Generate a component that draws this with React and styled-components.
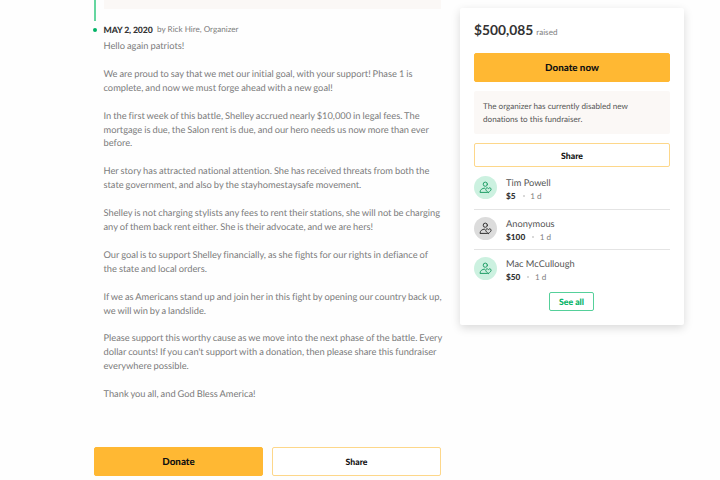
import styled, { createGlobalStyle } from "styled-components";

const colors = {
  yellow: "#ffb833",
  green: "#02b366",
  dark: "#333",
  grey: "#7c7c7c",
  beige: "#fbf8f6",
};

const GlobalStyle = createGlobalStyle`
  * {
    box-sizing: border-box;
  }
  body {
    margin: 0;
    background: #fefefe;
    font-family: Lato, "Liberation Sans", sans-serif;
    font-variant-ligatures: none;
    text-rendering: geometricPrecision;
    overflow: hidden;
  }
`;

const Page = styled.div`
  display: flex;
  align-items: flex-start;
  gap: 19px;
  width: 720px;
  height: 480px;
  padding-left: 94px;
  overflow: hidden;
`;

const Main = styled.main`
  width: 347px;
`;

const Previous = styled.div`
  display: flex;
  gap: 8px;
  height: 21px;
`;

const TimelineBar = styled.div`
  width: 2px;
  height: 21px;
  background: #65d6a0;
`;

const PreviousBox = styled.div`
  flex: 1;
  height: 9px;
  background: ${colors.beige};
`;

const UpdateHeader = styled.header`
  display: flex;
  align-items: center;
  height: 16px;
  margin-left: -1px;
  font-size: 8.12px;
  color: ${colors.grey};
`;

const Dot = styled.span`
  width: 4px;
  height: 4px;
  margin: 1px 6.5px 0 0;
  border-radius: 50%;
  background: ${colors.green};
`;

const UpdateDate = styled.strong`
  margin-right: 4.5px;
  font-size: 8.7px;
  font-weight: 900;
  letter-spacing: -0.12px;
  color: ${colors.dark};
`;

const Story = styled.div`
  height: 410px;
  padding: 2px 0 0 9.5px;
  font-size: 9.3px;
  line-height: 13.92px;
  word-spacing: -0.4px;
  color: ${colors.grey};
  white-space: pre;
`;

const Actions = styled.div`
  display: flex;
  gap: 9px;
`;

const Button = styled.button`
  flex: 1;
  display: block;
  width: 100%;
  height: ${({ $height }) => $height || 29}px;
  padding: 0;
  border: 1px solid ${({ $filled }) => ($filled ? colors.yellow : "#fdd78a")};
  border-radius: 2px;
  background: ${({ $filled }) => ($filled ? colors.yellow : "#fff")};
  color: #111;
  font-family: inherit;
  font-size: ${({ $filled }) => ($filled ? 9.8 : 8.7)}px;
  font-weight: 900;
  text-rendering: inherit;
`;

const Card = styled.aside`
  width: 224px;
  height: 317px;
  margin-top: 8px;
  padding: 12px 14px 0;
  border-radius: 2px;
  background: #fff;
  box-shadow: 0 3px 10px rgba(0, 0, 0, 0.15);
`;

const Raised = styled.div`
  display: flex;
  align-items: baseline;
  gap: 3px;
  height: 33px;
  line-height: 20px;
  font-size: 8.12px;
  color: #808080;
`;

const Amount = styled.strong`
  font-size: 13.8px;
  font-weight: 700;
  color: ${colors.dark};
`;

const Notice = styled.p`
  height: 43px;
  margin: 9px 0;
  padding: 9.3px 9px;
  border-radius: 2px;
  background: ${colors.beige};
  font-size: 8.12px;
  line-height: 12.2px;
  color: #555;
  white-space: pre;
`;

const Donations = styled.ul`
  margin: 1px 0 0;
  padding: 0;
  list-style: none;
`;

const Donation = styled.li`
  display: flex;
  gap: 9px;
  height: 40.6px;
  padding-top: 7.5px;

  & + & {
    border-top: 1px solid #e4e4e4;
  }

  & + &:last-child {
    padding-top: 7px;
  }
`;

const Avatar = styled.div`
  display: flex;
  align-items: center;
  justify-content: center;
  width: 23px;
  height: 23px;
  border-radius: 50%;
  background: ${({ $anonymous }) => ($anonymous ? "#dcdcdc" : "#ccf1e0")};
  color: ${({ $anonymous }) => ($anonymous ? "#333" : "#219e67")};
`;

const Donor = styled.div`
  font-size: 9.28px;
  line-height: 13px;
  color: #555;
`;

const Meta = styled.div`
  display: flex;
  align-items: center;
  padding-top: 2px;
  font-size: 8.12px;
  line-height: 10px;
  color: #808080;

  strong {
    font-size: 8.3px;
    font-weight: 900;
    color: ${colors.dark};
  }
`;

const Separator = styled.span`
  width: 2px;
  height: 2px;
  margin: 0 5.5px 0 7px;
  border-radius: 50%;
  background: #ccc;
`;

const SeeAll = styled.button`
  display: block;
  width: 45px;
  height: 19px;
  margin: 2px 0 0 75px;
  padding: 0;
  border: 1px solid #55d09a;
  border-radius: 2px;
  background: #fff;
  color: ${colors.green};
  font-family: inherit;
  font-size: 8.7px;
  font-weight: 900;
  text-rendering: inherit;
`;

const DonorIcon = () => (
  <svg
    width="13"
    height="13"
    viewBox="0 0 13 13"
    fill="none"
    stroke="currentColor"
    strokeWidth="1"
    strokeLinecap="round"
    strokeLinejoin="round"
  >
    <circle cx="6.3" cy="3.2" r="2.1" />
    <path d="M5.6 7.1C3 7.2 1.1 8.8 1 11.4h7.4" />
    <path d="M9.4 11.4C7.5 10.2 6.7 9.3 6.7 8.2c0-1.5 2-1.9 2.7-.6.7-1.3 2.7-.9 2.7.6 0 1.1-.8 2-2.7 3.2z" />
  </svg>
);

const story = `Hello again patriots!

We are proud to say that we met our initial goal, with your support! Phase 1 is
complete, and now we must forge ahead with a new goal!

In the first week of this battle, Shelley accrued nearly $10,000 in legal fees. The
mortgage is due, the Salon rent is due, and our hero needs us now more than ever
before.

Her story has attracted national attention. She has received threats from both the
state government, and also by the stayhomestaysafe movement.

Shelley is not charging stylists any fees to rent their stations, she will not be charging
any of them back rent either. She is their advocate, and we are hers!

Our goal is to support Shelley financially, as she fights for our rights in defiance of
the state and local orders.

If we as Americans stand up and join her in this fight by opening our country back up,
we will win by a landslide.

Please support this worthy cause as we move into the next phase of the battle. Every
dollar counts! If you can't support with a donation, then please share this fundraiser
everywhere possible.

Thank you all, and God Bless America!`;

const donations = [
  { name: "Tim Powell", amount: "$5" },
  { name: "Anonymous", amount: "$100", anonymous: true },
  { name: "Mac McCullough", amount: "$50" },
];

export default function App() {
  return (
    <>
      <GlobalStyle />
      <Page>
        <Main>
          <Previous>
            <TimelineBar />
            <PreviousBox />
          </Previous>
          <UpdateHeader>
            <Dot />
            <UpdateDate>MAY 2, 2020</UpdateDate>
            <span>by Rick Hire, Organizer</span>
          </UpdateHeader>
          <Story>{story}</Story>
          <Actions>
            <Button $filled>Donate</Button>
            <Button>Share</Button>
          </Actions>
        </Main>
        <Card>
          <Raised>
            <Amount>$500,085</Amount>
            <span>raised</span>
          </Raised>
          <Button $filled>Donate now</Button>
          <Notice>
            {"The organizer has currently disabled new\ndonations to this fundraiser."}
          </Notice>
          <Button $height={24}>Share</Button>
          <Donations>
            {donations.map(({ name, amount, anonymous }) => (
              <Donation key={name}>
                <Avatar $anonymous={anonymous}>
                  <DonorIcon />
                </Avatar>
                <div>
                  <Donor>{name}</Donor>
                  <Meta>
                    <strong>{amount}</strong>
                    <Separator />
                    <span>1 d</span>
                  </Meta>
                </div>
              </Donation>
            ))}
          </Donations>
          <SeeAll>See all</SeeAll>
        </Card>
      </Page>
    </>
  );
}
